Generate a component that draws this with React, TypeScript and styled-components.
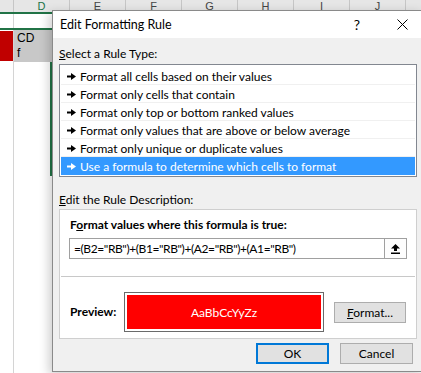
import React from "react";
import styled, { createGlobalStyle } from "styled-components";

const UI = `"Segoe UI", Lato, "Noto Sans", sans-serif`;

const GlobalStyle = createGlobalStyle`
  html, body { margin: 0; padding: 0; background: #fff; }
  body { font-family: ${UI}; overflow: hidden; }
`;

const Screen = styled.div`
  position: relative;
  width: 421px;
  height: 373px;
  overflow: hidden;
  background: #fff;
`;

/* ---------- spreadsheet behind the dialog ---------- */

const Sheet = styled.div`
  display: flex;
  flex-direction: column;
  height: 100%;
  font-family: "Liberation Sans", "Noto Sans", sans-serif;
`;

const HeaderRow = styled.div`
  display: flex;
  height: 12px;
  background: #e6e6e6;
  border-bottom: 2px solid #217346;
`;

const HeaderCell = styled.div<{ $w: number; $active?: boolean }>`
  width: ${(p) => p.$w}px;
  flex-shrink: 0;
  box-sizing: border-box;
  border-right: 1px solid #c6c6c6;
  text-align: center;
  font-size: 11px;
  line-height: 13px;
  color: ${(p) => (p.$active ? "#217346" : "#444")};
`;

const SheetRow = styled.div<{ $h?: number; $green?: boolean }>`
  display: flex;
  height: ${(p) => (p.$h ? `${p.$h}px` : "auto")};
  flex: ${(p) => (p.$h ? "none" : "1")};
  border-bottom: ${(p) => (p.$green ? "2px solid #217346" : "none")};
`;

const Cell = styled.div<{ $w?: number; $bg?: string }>`
  width: ${(p) => (p.$w ? `${p.$w}px` : "auto")};
  flex: ${(p) => (p.$w ? "none" : "1")};
  box-sizing: border-box;
  background: ${(p) => p.$bg || "transparent"};
  border-right: 1px solid #d4d4d4;
  font-size: 12px;
  line-height: 15px;
  padding: 1px 0 0 3px;
`;

const RedCell = styled.div`
  width: 14px;
  flex: none;
  box-sizing: border-box;
  border-right: 1px solid #d4d4d4;
  padding: 1px 0;
  &::before {
    content: "";
    display: block;
    height: 100%;
    background: #c00000;
  }
`;

const SelectionEdge = styled.div`
  width: 36px;
  height: 114px;
  flex: none;
  border-right: 2px solid #217346;
`;

/* ---------- dialog ---------- */

const Dialog = styled.div`
  position: absolute;
  left: 52px;
  top: 10px;
  width: 372px;
  height: 362px;
  box-sizing: border-box;
  border: 1px solid #8a8a8a;
  background: #f0f0f0;
  box-shadow: -3px 3px 10px rgba(0, 0, 0, 0.2);
  display: flex;
  flex-direction: column;
  font-family: ${UI};
  font-size: 12px;
  color: #000;
`;

const TitleBar = styled.div`
  height: 27px;
  display: flex;
  align-items: center;
  background: #fff;
  padding-left: 7px;
`;

const Title = styled.div`
  flex: 1;
  font-size: 12.5px;
`;

const TitleButton = styled.div<{ $w: number }>`
  width: ${(p) => p.$w}px;
  height: 27px;
  display: flex;
  align-items: center;
  justify-content: center;
  font-size: 14px;
`;

const Body = styled.div`
  flex: 1;
  display: flex;
  flex-direction: column;
  padding: 8px 6px 0 6px;
`;

const Label = styled.div<{ $top?: number }>`
  line-height: 16px;
  height: 16px;
  margin-top: ${(p) => p.$top || 0}px;
  margin-bottom: 1px;
`;

const ListBox = styled.div`
  border: 1px solid #828790;
  background: #fff;
  padding: 2px 1px 1px;
  margin-top: 1px;
`;

const ListItem = styled.div<{ $selected?: boolean; $last?: boolean }>`
  height: 18px;
  box-sizing: border-box;
  display: flex;
  align-items: center;
  padding-left: 6px;
  padding-top: 1px;
  background: ${(p) => (p.$selected ? "#3399ff" : "#fff")};
  color: ${(p) => (p.$selected ? "#fff" : "#000")};
  border-bottom: ${(p) => (p.$last ? "none" : "1px solid #f0f0f0")};
  white-space: nowrap;
  svg {
    margin-right: 4px;
    flex: none;
  }
`;

const DescBox = styled.div`
  height: 130px;
  box-sizing: border-box;
  border: 1px solid #cfcfcf;
  background: #fff;
  padding: 0 9px;
  display: flex;
  flex-direction: column;
`;

const Bold = styled.div`
  font-weight: bold;
  line-height: 16px;
`;

const DescTitle = styled(Bold)`
  margin-top: 7px;
  padding-left: 1px;
`;

const FormulaField = styled.div`
  margin-top: 5px;
  height: 21px;
  box-sizing: border-box;
  border: 1px solid #a0a0a0;
  display: flex;
  align-items: stretch;
`;

const FormulaText = styled.div`
  flex: 1;
  padding-left: 4px;
  display: flex;
  align-items: center;
  white-space: nowrap;
  letter-spacing: -0.4px;
`;

const CollapseButton = styled.div`
  width: 21px;
  border-left: 1px solid #a0a0a0;
  background: #fdfdfd;
  display: flex;
  align-items: center;
  justify-content: center;
`;

const Separator = styled.div`
  height: 1px;
  background: #c8c8c8;
  margin: 17px -8px 0;
`;

const PreviewRow = styled.div`
  margin-top: 15px;
  height: 40px;
  display: flex;
  align-items: center;
`;

const PreviewLabel = styled(Bold)`
  width: 54px;
  padding-left: 1px;
`;

const PreviewBox = styled.div`
  width: 200px;
  height: 40px;
  box-sizing: border-box;
  border: 1px solid #6a6a6a;
  padding: 2px;
  background: #fff;
`;

const PreviewFill = styled.div`
  height: 100%;
  background: #ff0000;
  color: #fff;
  display: flex;
  align-items: center;
  justify-content: center;
`;

const Button = styled.div<{ $default?: boolean; $w?: number }>`
  width: ${(p) => p.$w || 73}px;
  height: 21px;
  box-sizing: border-box;
  background: #e1e1e1;
  border: ${(p) => (p.$default ? "2px solid #0078d7" : "1px solid #adadad")};
  display: flex;
  align-items: center;
  justify-content: center;
`;

const FormatButton = styled(Button)`
  margin-left: 10px;
`;

const Footer = styled.div`
  margin-top: 4px;
  display: flex;
  justify-content: flex-end;
  gap: 11px;
  padding-right: 4px;
`;

const RuleArrow = () => (
  <svg width="9" height="7" viewBox="0 0 9 7">
    <rect x="0" y="2.5" width="5" height="2" fill="currentColor" />
    <polygon points="4,0 9,3.5 4,7" fill="currentColor" />
  </svg>
);

const CloseIcon = () => (
  <svg width="11" height="11" viewBox="0 0 11 11">
    <path d="M0.5 0.5 L10.5 10.5 M10.5 0.5 L0.5 10.5" stroke="#000" strokeWidth="1" fill="none" />
  </svg>
);

const CollapseIcon = () => (
  <svg width="9" height="10" viewBox="0 0 9 10">
    <polygon points="4.5,0 9,4.5 6,4.5 6,7 3,7 3,4.5 0,4.5" fill="#000" />
    <rect x="0" y="8.5" width="9" height="1.5" fill="#000" />
  </svg>
);

const ruleTypes = [
  "Format all cells based on their values",
  "Format only cells that contain",
  "Format only top or bottom ranked values",
  "Format only values that are above or below average",
  "Format only unique or duplicate values",
  "Use a formula to determine which cells to format",
];

const columns = [
  { name: "", w: 14 },
  { name: "D", w: 56, active: true },
  { name: "E", w: 56 },
  { name: "F", w: 56 },
  { name: "G", w: 56 },
  { name: "H", w: 56 },
  { name: "I", w: 56 },
  { name: "J", w: 56 },
];

export default function App() {
  return (
    <Screen>
      <GlobalStyle />
      <Sheet>
        <HeaderRow>
          {columns.map((c) => (
            <HeaderCell key={c.name || "c"} $w={c.w} $active={c.active}>
              {c.name}
            </HeaderCell>
          ))}
        </HeaderRow>
        <SheetRow $h={14} $green>
          <Cell $w={14} />
          <Cell />
        </SheetRow>
        <SheetRow $h={32}>
          <RedCell />
          <Cell $w={56} $bg="#c8c8c8">
            CD
            <br />f
          </Cell>
        </SheetRow>
        <SheetRow>
          <Cell $w={14} />
          <SelectionEdge />
        </SheetRow>
      </Sheet>

      <Dialog>
        <TitleBar>
          <Title>Edit Formatting Rule</Title>
          <TitleButton $w={30} style={{ marginRight: 9 }}>?</TitleButton>
          <TitleButton $w={42}>
            <CloseIcon />
          </TitleButton>
        </TitleBar>

        <Body>
          <Label>
            <u>S</u>elect a Rule Type:
          </Label>
          <ListBox>
            {ruleTypes.map((t, i) => (
              <ListItem key={t} $selected={i === ruleTypes.length - 1} $last={i === ruleTypes.length - 1}>
                <RuleArrow />
                {t}
              </ListItem>
            ))}
          </ListBox>

          <Label $top={15}>
            <u>E</u>dit the Rule Description:
          </Label>
          <DescBox>
            <DescTitle>
              F<u>o</u>rmat values where this formula is true:
            </DescTitle>
            <FormulaField>
              <FormulaText>=(B2="RB")+(B1="RB")+(A2="RB")+(A1="RB")</FormulaText>
              <CollapseButton>
                <CollapseIcon />
              </CollapseButton>
            </FormulaField>
            <Separator />
            <PreviewRow>
              <PreviewLabel>Preview:</PreviewLabel>
              <PreviewBox>
                <PreviewFill>AaBbCcYyZz</PreviewFill>
              </PreviewBox>
              <FormatButton $w={72}>
                <span>
                  <u>F</u>ormat...
                </span>
              </FormatButton>
            </PreviewRow>
          </DescBox>

          <Footer>
            <Button $default>OK</Button>
            <Button>Cancel</Button>
          </Footer>
        </Body>
      </Dialog>
    </Screen>
  );
}
